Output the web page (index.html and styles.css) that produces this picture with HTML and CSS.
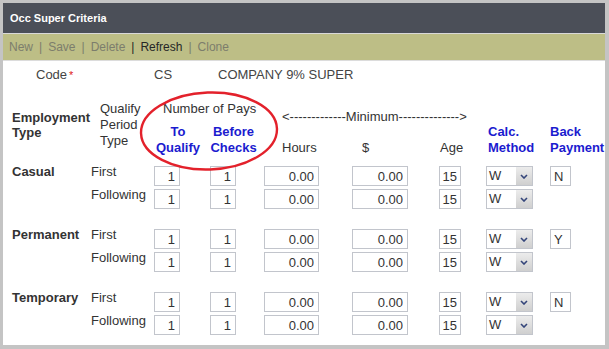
FILE: index.html
```html
<!doctype html>
<html lang="en">

<head>
  <meta charset="utf-8">
  <title>Occ Super Criteria</title>
  <link rel="stylesheet" href="styles.css">
</head>

<body>
  <section class="panel">
    <div class="title">Occ Super Criteria</div>

    <div class="toolbar">
      <span class="tool off">New</span>
      <span class="tool off"><i>|</i>Save</span>
      <span class="tool off"><i>|</i>Delete</span>
      <span class="tool on"><i>|</i>Refresh</span>
      <span class="tool off"><i>|</i>Clone</span>
    </div>

    <div class="content">
      <div class="code-row">
        <span class="code-label">Code<span class="req">*</span></span>
        <span class="code-val">CS</span>
        <span class="code-desc">COMPANY 9% SUPER</span>
      </div>

      <div class="head">
        <div class="h-emp">Employment<br>Type</div>
        <div class="h-period">Qualify<br>Period<br>Type</div>
        <div class="h-pays">Number of Pays</div>
        <div class="h-min">&lt;-------------Minimum--------------&gt;</div>
        <div class="h-blue h-toq">To<br>Qualify</div>
        <div class="h-blue h-bef">Before<br>Checks</div>
        <div class="h-hours">Hours</div>
        <div class="h-dollar">$</div>
        <div class="h-age">Age</div>
        <div class="h-blue h-calc">Calc.<br>Method</div>
        <div class="h-blue h-back">Back<br>Payment</div>
      </div>

      <!-- Casual -->
      <div class="group">
        <div class="g-name">Casual</div>
        <div class="g-type">First</div>
        <input class="f f-pays" value="1">
        <input class="f f-pays" value="1">
        <input class="f f-hours" value="0.00">
        <input class="f f-dollar" value="0.00">
        <input class="f f-age" value="15">
        <div class="sel"><span>W</span><b><svg width="8" height="5" viewBox="0 0 8 5"><path d="M1 1 L4 4 L7 1" fill="none" stroke="#34457a" stroke-width="1.6"/></svg></b></div>
        <input class="f f-back" value="N">

        <div class="g-type">Following</div>
        <input class="f f-pays" value="1">
        <input class="f f-pays" value="1">
        <input class="f f-hours" value="0.00">
        <input class="f f-dollar" value="0.00">
        <input class="f f-age" value="15">
        <div class="sel"><span>W</span><b><svg width="8" height="5" viewBox="0 0 8 5"><path d="M1 1 L4 4 L7 1" fill="none" stroke="#34457a" stroke-width="1.6"/></svg></b></div>
      </div>

      <!-- Permanent -->
      <div class="group">
        <div class="g-name">Permanent</div>
        <div class="g-type">First</div>
        <input class="f f-pays" value="1">
        <input class="f f-pays" value="1">
        <input class="f f-hours" value="0.00">
        <input class="f f-dollar" value="0.00">
        <input class="f f-age" value="15">
        <div class="sel"><span>W</span><b><svg width="8" height="5" viewBox="0 0 8 5"><path d="M1 1 L4 4 L7 1" fill="none" stroke="#34457a" stroke-width="1.6"/></svg></b></div>
        <input class="f f-back" value="Y">

        <div class="g-type">Following</div>
        <input class="f f-pays" value="1">
        <input class="f f-pays" value="1">
        <input class="f f-hours" value="0.00">
        <input class="f f-dollar" value="0.00">
        <input class="f f-age" value="15">
        <div class="sel"><span>W</span><b><svg width="8" height="5" viewBox="0 0 8 5"><path d="M1 1 L4 4 L7 1" fill="none" stroke="#34457a" stroke-width="1.6"/></svg></b></div>
      </div>

      <!-- Temporary -->
      <div class="group">
        <div class="g-name">Temporary</div>
        <div class="g-type">First</div>
        <input class="f f-pays" value="1">
        <input class="f f-pays" value="1">
        <input class="f f-hours" value="0.00">
        <input class="f f-dollar" value="0.00">
        <input class="f f-age" value="15">
        <div class="sel"><span>W</span><b><svg width="8" height="5" viewBox="0 0 8 5"><path d="M1 1 L4 4 L7 1" fill="none" stroke="#34457a" stroke-width="1.6"/></svg></b></div>
        <input class="f f-back" value="N">

        <div class="g-type">Following</div>
        <input class="f f-pays" value="1">
        <input class="f f-pays" value="1">
        <input class="f f-hours" value="0.00">
        <input class="f f-dollar" value="0.00">
        <input class="f f-age" value="15">
        <div class="sel"><span>W</span><b><svg width="8" height="5" viewBox="0 0 8 5"><path d="M1 1 L4 4 L7 1" fill="none" stroke="#34457a" stroke-width="1.6"/></svg></b></div>
      </div>

      <!-- the red highlight drawn over the header -->
      <svg class="circle" width="144" height="84" viewBox="0 0 144 84">
        <ellipse cx="72" cy="42" rx="68" ry="38.5" fill="none" stroke="#e3212b" stroke-width="2.4" transform="rotate(-2 72 42)"/>
      </svg>
    </div>
  </section>
</body>

</html>
```

FILE: styles.css
```css
* {
  box-sizing: border-box;
}

body {
  margin: 0;
  font-family: "Liberation Sans", Arial, Helvetica, sans-serif;
  color: #333;
  background: #fff;
}

.panel {
  width: 609px;
  height: 349px;
  border: 3px solid #c4c4c4;
  border-right-width: 4px;
  border-bottom-width: 4px;
  display: flex;
  flex-direction: column;
}

.title {
  height: 31px;
  background: #4b4f58;
  border-bottom: 1px solid #d9d9d9;
  color: #fff;
  font-weight: bold;
  font-size: 11px;
  padding-left: 7px;
  display: flex;
  align-items: center;
}

.toolbar {
  height: 27px;
  background: #bdbe86;
  border-bottom: 1px solid #dcdcdc;
  padding-left: 6px;
  display: flex;
  align-items: center;
  font-size: 12px;
}

.tool i {
  font-style: normal;
  margin: 0 6px;
}

.off {
  color: #7c7d6c;
}

.on {
  color: #262626;
}

.content {
  position: relative;
  flex: 1;
  padding: 6px 0 0 9px;
  font-size: 13px;
}

.code-row {
  display: flex;
  line-height: 16px;
  color: #444;
}

.code-label {
  width: 142px;
  padding-left: 24px;
}

.req {
  color: #e02020;
  font-size: 11px;
  vertical-align: top;
  margin-left: 2px;
}

.code-val {
  width: 64px;
}

/* shared column layout for header and rows */
.head,
.group {
  display: grid;
  grid-template-columns: 79px 59px 56px 55px 87px 87px 47px 64px 59px;
}

.head {
  margin-top: 18px;
  grid-template-rows: 23px 16px 16px;
  line-height: 16px;
}

.h-emp {
  grid-column: 1;
  grid-row: 1 / 4;
  font-weight: bold;
  line-height: 15px;
  padding-top: 9px;
}

.h-period {
  grid-column: 2;
  grid-row: 1 / 4;
  padding-left: 9px;
}

.h-pays {
  grid-column: 3 / 5;
  grid-row: 1;
  padding-left: 13px;
  white-space: nowrap;
}

.h-min {
  grid-column: 5 / 8;
  grid-row: 1;
  align-self: end;
  padding-left: 21px;
  margin-bottom: -1px;
  white-space: nowrap;
}

.h-blue {
  color: #1b1bcf;
  font-weight: bold;
  grid-row: 2 / 4;
}

.h-toq {
  grid-column: 3;
  text-align: center;
}

.h-bef {
  grid-column: 4;
  text-align: center;
}

.h-hours {
  grid-column: 5;
  grid-row: 3;
  padding-left: 21px;
}

.h-dollar {
  grid-column: 6;
  grid-row: 3;
  padding-left: 14px;
}

.h-age {
  grid-column: 7;
  grid-row: 3;
  padding-left: 5px;
}

.h-calc {
  grid-column: 8;
  padding-left: 6px;
}

.h-back {
  grid-column: 9;
  padding-left: 4px;
  white-space: nowrap;
}

.group {
  margin-top: 8px;
  grid-template-rows: 23px 23px;
  line-height: 16px;
}

.group + .group {
  margin-top: 17px;
}

.g-name {
  grid-column: 1;
  font-weight: bold;
}

.g-type {
  grid-column: 2;
}

.f {
  height: 20px;
  margin: 2px 0 0 4px;
  border: 1px solid #c2c5cc;
  padding: 0 4px 0 2px;
  font-family: "Liberation Sans", Arial, Helvetica, sans-serif;
  font-size: 13px;
  color: #333;
  text-align: right;
  background: #fff;
  outline: none;
}

.f-pays {
  width: 26px;
}

.f-hours {
  width: 55px;
  margin-left: 3px;
}

.f-dollar {
  width: 56px;
}

.f-age {
  width: 22px;
  padding-right: 3px;
}

.f-back {
  width: 21px;
  text-align: left;
  padding-left: 3px;
}

.sel {
  width: 47px;
  height: 20px;
  margin: 2px 0 0 4px;
  border: 1px solid #c2c5cc;
  display: flex;
  align-items: stretch;
  line-height: 18px;
}

.sel span {
  flex: 1;
  padding-left: 2px;
}

.sel b {
  width: 16px;
  background: linear-gradient(#ececec, #cfcfcf);
  display: flex;
  align-items: center;
  justify-content: center;
}

.circle {
  position: absolute;
  left: 134px;
  top: 28px;
}
```
